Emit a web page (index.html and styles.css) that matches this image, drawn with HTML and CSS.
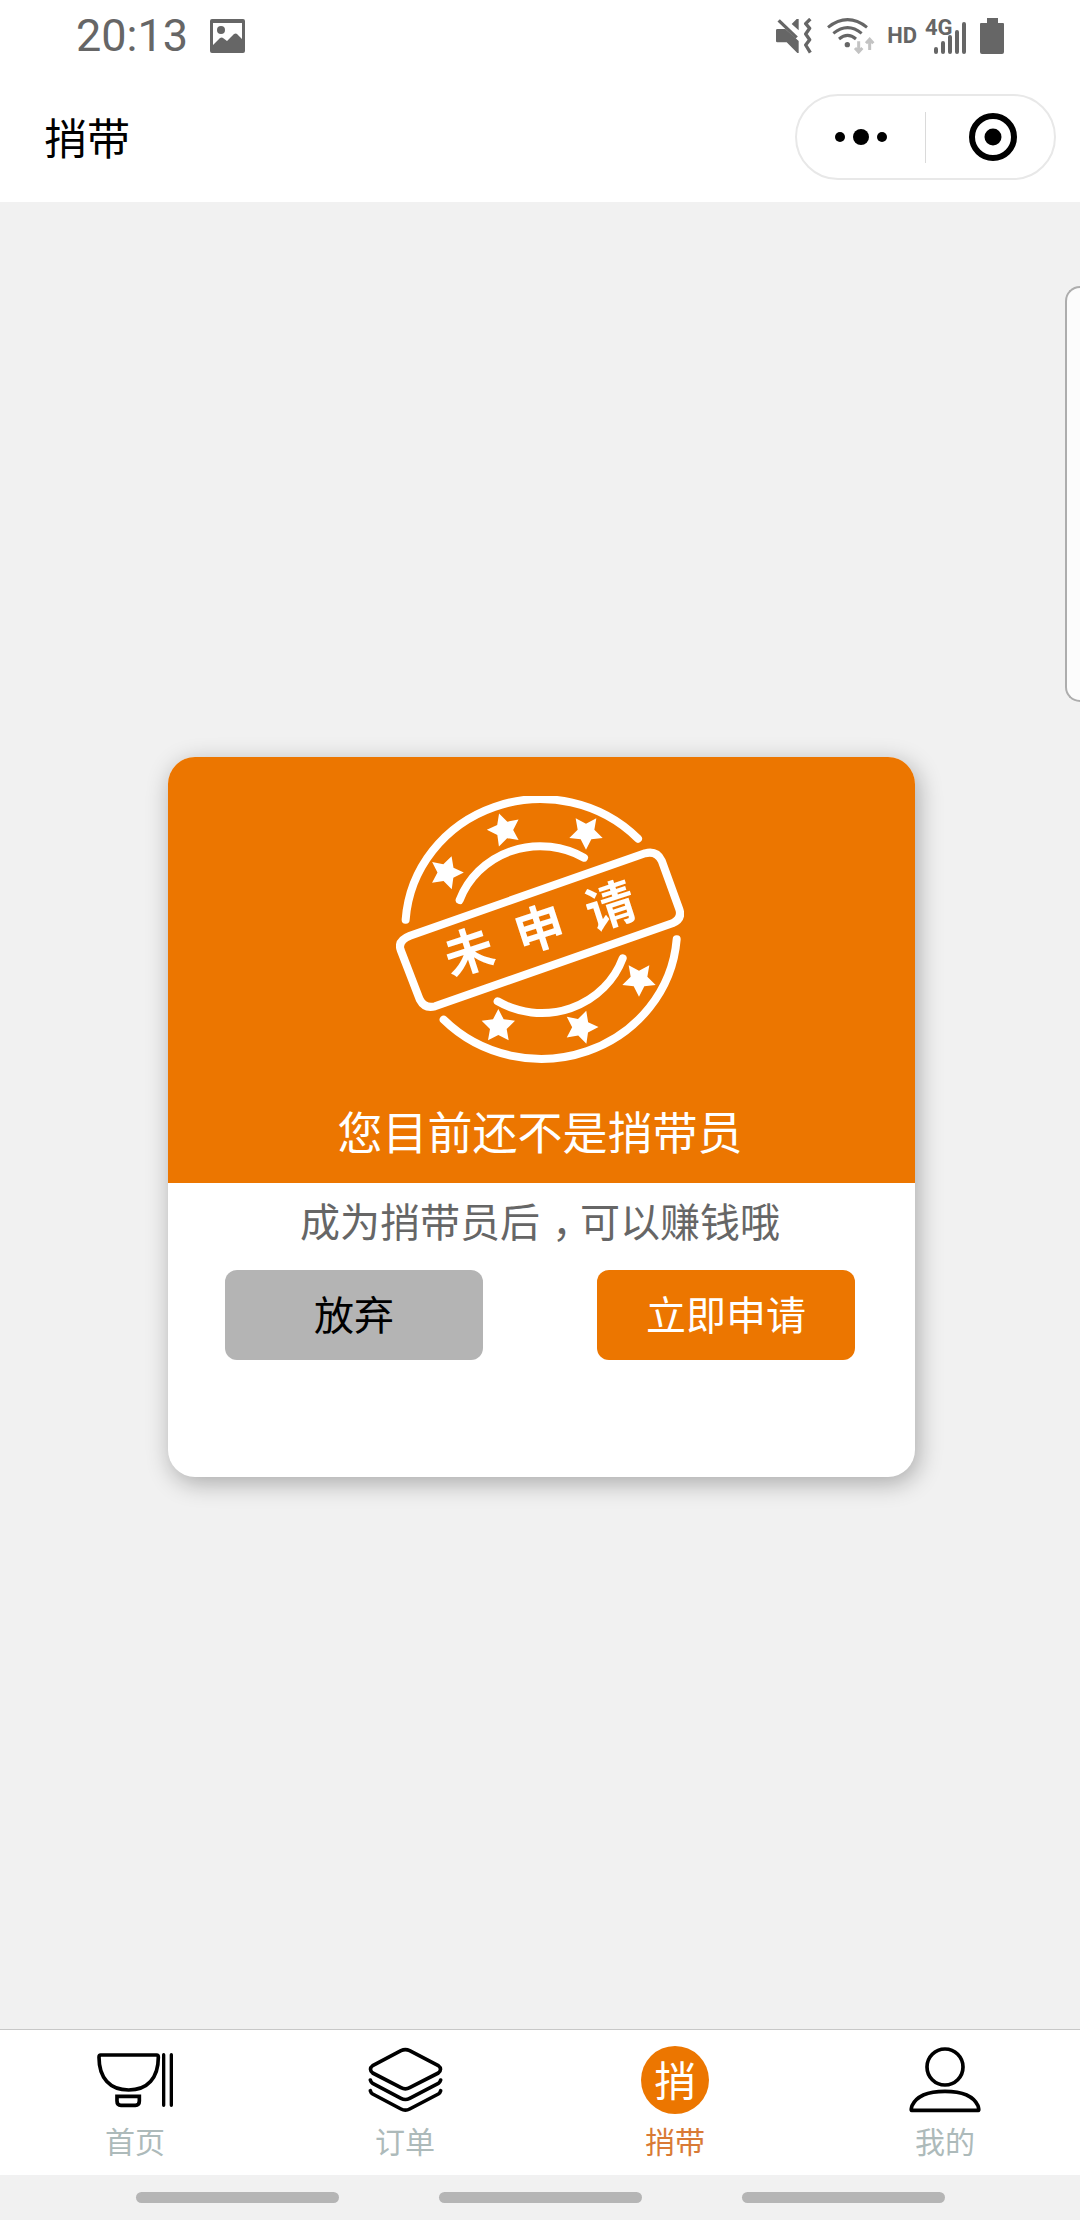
FILE: index.html
```html
<!DOCTYPE html>
<html lang="zh-CN">
<head>
<meta charset="utf-8">
<meta name="viewport" content="width=device-width, initial-scale=1">
<title>捎带</title>
<link rel="stylesheet" href="styles.css">
</head>
<body>
<div class="page">
  <div class="status">
    <time class="clock">20:13</time>
    <svg class="picture" width="35" height="35" viewBox="0 0 35 35" aria-hidden="true">
      <path fill="#666" fill-rule="evenodd" d="M2 0h31a2 2 0 0 1 2 2v30a2 2 0 0 1-2 2H2a2 2 0 0 1-2-2V2a2 2 0 0 1 2-2zM3 4v22l7-7q2-1 3 0l4 3 7-7q2-1 3 0l5 5V4z"/>
      <circle cx="11" cy="11" r="4" fill="#666"/>
    </svg>
    <div class="signals">
      <svg width="36" height="36" viewBox="0 0 108 108" aria-hidden="true">
        <path fill="#666" d="M4 33h24l40 36v36h-4L32 73H4q-4 0-4-4V37q0-4 4-4zM68 3v34L47 18 62 3z"/>
        <path d="M8 7l54 52" stroke="#666" stroke-width="10"/>
        <path d="M103 3L89 17l12 14-12 17 12 17-12 16 14 23" fill="none" stroke="#666" stroke-width="10" stroke-linejoin="round"/>
      </svg>
      <svg class="wifi" width="48" height="36" viewBox="0 0 144 108" aria-hidden="true">
        <g fill="none" stroke="#666" stroke-width="9">
          <path d="M3 28Q62-18 120 28"/><path d="M19 46Q62 12 104 46"/><path d="M36 63Q62 41 87 63"/>
        </g>
        <circle cx="61" cy="80" r="8" fill="#666"/>
        <path d="M95 70v30M84 90l11 12 11-12M128 96V66M117 76l11-12 11 12" fill="none" stroke="#c3c3c3" stroke-width="9"/>
      </svg>
      <span class="hd">HD</span>
      <svg class="cell" width="44" height="52" viewBox="0 -8 44 52" aria-label="4G">
        <text x="0" y="17" class="cell-text">4G</text>
        <path d="M11 31v3M18 25v9M25 19v15M32 14v20M39 6v28" stroke="#666" stroke-width="4" stroke-linecap="round"/>
      </svg>
      <svg width="24" height="36" viewBox="0 0 24 36" aria-hidden="true">
        <path fill="#666" d="M7 0h11v5h5q1 0 1 1v28q0 2-2 2H2q-2 0-2-2V6q0-1 1-1h6z"/>
      </svg>
    </div>
  </div>

  <header class="header">
    <h1 class="title">捎带</h1>
    <div class="capsule">
      <button class="capsule-btn" type="button" aria-label="更多">
        <svg width="52" height="18" viewBox="0 0 52 18"><circle cx="5" cy="9" r="5"/><circle cx="26" cy="9" r="8"/><circle cx="47" cy="9" r="5"/></svg>
      </button>
      <span class="divider"></span>
      <button class="capsule-btn" type="button" aria-label="关闭">
        <svg width="48" height="48" viewBox="0 0 48 48"><circle cx="24" cy="24" r="21" fill="none" stroke="#000" stroke-width="6"/><circle cx="24" cy="24" r="8.5"/></svg>
      </button>
    </div>
  </header>

  <main class="main">
    <section class="card">
      <div class="card-head">
        <svg class="stamp" width="288" height="267" viewBox="48 48 864 801" role="img" aria-label="未申请">
          <defs><path id="star" d="M0-51L16-20 50-16 25 9 31 43 0 27-31 43-25 9-50-16-16-20z"/></defs>
          <g fill="none" stroke="#fff" stroke-width="24" stroke-linecap="round" stroke-linejoin="round">
            <path d="M77 419A406 389 0 0 1 774 176"/>
            <path d="M191 719A408 389 0 0 0 890 478"/>
            <path d="M239 360A258 248 0 0 1 612 233"/>
            <path d="M353 664A258 248 0 0 0 728 535"/>
            <path d="M90 467L795 220Q830 211 845 242L897 385Q909 416 877 430L165 679Q134 687 119 658L62 510Q52 482 90 467z"/>
          </g>
          <g fill="#fff">
            <use href="#star" transform="translate(199 277) rotate(18)"/>
            <use href="#star" transform="translate(373 149) rotate(-18)"/>
            <use href="#star" transform="translate(618 158) rotate(180)"/>
            <use href="#star" transform="translate(777 599) rotate(180)"/>
            <use href="#star" transform="translate(355 738)"/>
            <use href="#star" transform="translate(603 741) rotate(18)"/>
          </g>
          <text class="stamp-text" x="-224 -2 222" y="54" transform="translate(480 446) rotate(-18)">未申请</text>
        </svg>
        <h2 class="card-title">您目前还不是捎带员</h2>
      </div>
      <div class="card-body">
        <p class="card-text">成为捎带员后<span class="comma">，</span>可以赚钱哦</p>
        <div class="actions">
          <button class="btn" type="button">放弃</button>
          <button class="btn btn-primary" type="button">立即申请</button>
        </div>
      </div>
    </section>
  </main>

  <nav class="tabs">
    <a class="tab" href="#home">
      <svg class="tab-icon" viewBox="105 102 240 216" fill="none" stroke="#000" stroke-width="11" stroke-linejoin="round" stroke-linecap="round">
        <path d="M122 135H290Q295 135 295 142C295 205 262 240 206 240S117 205 117 142Q117 135 122 135z"/>
        <path d="M171 259H238V273Q238 286 226 286H183Q171 286 171 273z" stroke-linejoin="miter"/>
        <path d="M311 134V286M334 134V286" stroke-width="10"/>
      </svg>
      <span>首页</span>
    </a>
    <a class="tab" href="#orders">
      <svg class="tab-icon" viewBox="915 102 240 216" fill="none" stroke="#000" stroke-width="11" stroke-linejoin="round" stroke-linecap="round">
        <path d="M1023 122Q1036 116 1049 122L1135 167Q1148 177 1135 189L1049 233Q1036 240 1023 233L938 189Q925 177 938 167z"/>
        <path d="M931 210Q933 217 938 220L1023 265Q1036 272 1049 265L1135 220Q1140 217 1142 210"/>
        <path d="M931 242Q933 249 938 252L1023 297Q1036 304 1049 297L1135 252Q1140 249 1142 242"/>
      </svg>
      <span>订单</span>
    </a>
    <a class="tab tab-active" href="#carry" aria-current="page">
      <span class="tab-icon"><span class="badge">捎</span></span>
      <span>捎带</span>
    </a>
    <a class="tab" href="#mine">
      <svg class="tab-icon" viewBox="0 0 240 216" fill="none" stroke="#000" stroke-width="11" stroke-linejoin="round">
        <circle cx="120" cy="69" r="54"/>
        <path d="M20 199Q17 199 21 185C35 155 70 142 120 142S205 155 219 185Q223 199 220 199z"/>
      </svg>
      <span>我的</span>
    </a>
  </nav>

  <div class="gestures"><span class="pill"></span><span class="pill"></span><span class="pill"></span></div>
  <div class="edge-panel"></div>
</div>
</body>
</html>
```
FILE: styles.css
```css
* { box-sizing: border-box; }

body {
  margin: 0;
  background: #f1f1f1;
  color: #000;
  font-family: "Noto Sans CJK SC", "Noto Sans", sans-serif;
}

h1, h2, p { margin: 0; font-weight: 400; }

button { border: 0; margin: 0; padding: 0; font: inherit; color: inherit; cursor: pointer; }

svg { display: block; }

.page {
  position: relative;
  display: flex;
  flex-direction: column;
  min-height: 100vh;
  overflow: hidden;
}

/* System status bar */
.status {
  display: flex;
  align-items: center;
  height: 72px;
  padding: 0 76px;
  background: #fff;
  color: #666;
  font-family: Roboto, sans-serif;
}

.clock { font-size: 45px; line-height: 72px; }
.picture { margin-left: 22px; }
.signals { display: flex; align-items: center; margin-left: auto; }
.wifi { margin-left: 15px; }
.hd { margin-left: 12px; font-size: 22px; font-weight: 700; line-height: 36px; }
.cell { margin: 0 11px 0 8px; }
.cell-text { font-size: 22px; font-weight: 700; fill: #666; }

/* Title bar */
.header {
  display: flex;
  align-items: center;
  justify-content: space-between;
  height: 130px;
  padding: 0 24px 0 44px;
  background: #fff;
}

.title { padding-bottom: 2px; font-size: 43px; line-height: 60px; }

.capsule {
  display: grid;
  grid-template-columns: 1fr 1px 1fr;
  align-items: center;
  width: 261px;
  height: 86px;
  border: 2px solid #e8e8e8;
  border-radius: 43px;
}

.capsule-btn {
  display: flex;
  align-items: center;
  justify-content: center;
  height: 100%;
  background: none;
}

.capsule-btn:last-child { padding-left: 5px; }

.divider { width: 1px; height: 51px; background: #dadada; }

/* Prompt card */
.main {
  display: flex;
  flex: 1;
  align-items: center;
  padding: 3px 165px 0 168px;
}

.card {
  flex: 1;
  border-radius: 27px;
  background: #fff;
  box-shadow: 3px 6px 24px rgba(0, 0, 0, 0.3);
  text-align: center;
  overflow: hidden;
}

.card-head {
  padding: 39px 60px 22px 57px;
  background: #ec7600;
  color: #fff;
}

.stamp { margin: 0 auto 38px; }

.stamp-text {
  font-size: 148px;
  font-weight: 700;
  fill: #fff;
  text-anchor: middle;
}

.card-title { font-size: 45px; line-height: 60px; }
.card-body { padding: 7px 60px 117px 57px; }
.card-text { color: #666; font-size: 40px; line-height: 60px; }

/* Half-width comma, set in the middle of a full-width cell */
.comma { padding: 0 8px 0 12px; font-feature-settings: "halt"; }

.actions {
  display: grid;
  grid-template-columns: 1fr 1fr;
  gap: 114px;
  margin-top: 20px;
}

.btn {
  height: 90px;
  padding-bottom: 4px;
  border-radius: 12px;
  background: #b4b4b4;
  font-size: 40px;
}

.btn-primary { background: #ec7600; color: #fff; }

/* Bottom tabs */
.tabs {
  display: grid;
  grid-template-columns: repeat(4, 1fr);
  border-top: 1px solid #c8c8c8;
  background: #fff;
}

.tab {
  display: flex;
  flex-direction: column;
  align-items: center;
  gap: 6px;
  padding: 14px 0 17px;
  color: #adbaba;
  font-size: 30px;
  line-height: 36px;
  text-decoration: none;
}

.tab-active { color: #d97a35; }

.tab-icon {
  display: flex;
  align-items: center;
  justify-content: center;
  width: 80px;
  height: 72px;
}

.badge {
  width: 68px;
  height: 68px;
  border-radius: 50%;
  background: #ec7600;
  color: #fff;
  font-size: 42px;
  line-height: 66px;
  text-align: center;
}

/* Gesture bar */
.gestures {
  display: flex;
  align-items: center;
  justify-content: center;
  gap: 100px;
  height: 45px;
}

.pill { width: 203px; height: 11px; border-radius: 6px; background: #b5b5b5; }

/* Handle that overlaps the right edge of the screen */
.edge-panel {
  position: absolute;
  top: 286px;
  right: 0;
  width: 15px;
  height: 416px;
  border: 2px solid #adadad;
  border-right: 0;
  border-radius: 18px 0 0 18px;
  background: #fcfcfc;
}
```
